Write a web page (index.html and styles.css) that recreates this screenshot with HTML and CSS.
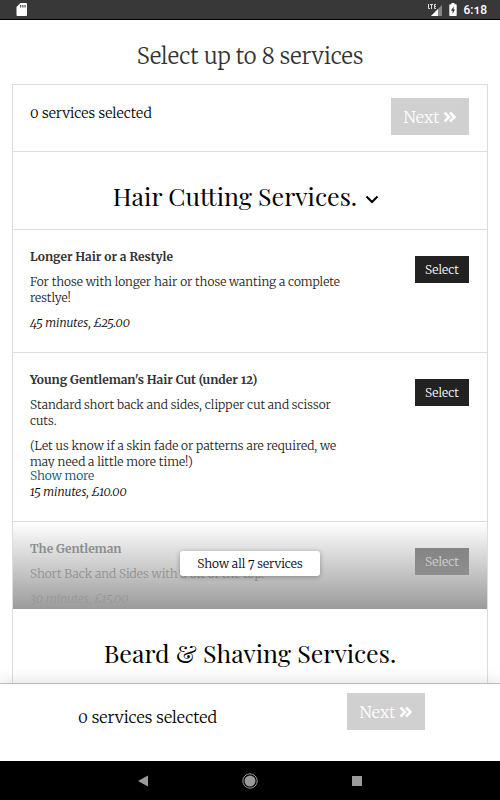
FILE: index.html
```
<!DOCTYPE html>
<html lang="en">
<head>
<meta charset="utf-8">
<meta name="viewport" content="width=device-width, initial-scale=1">
<title>Select services</title>
<link rel="stylesheet" href="styles.css">
</head>
<body>
<header class="status">
  <svg class="status-card" width="12" height="13" viewBox="0 0 12 13" aria-hidden="true"><path fill="#fff" d="M4.500 0H10a1 1 0 0 1 1 1v11a1 1 0 0 1-1 1H1.500a1 1 0 0 1-1-1V4z"/><path fill="#555" d="M4 2h1.300v2.500H4zM6.200 2h1.300v2.500H6.200zM8.400 2h1.300v2.500H8.400z"/></svg>
  <div class="status-right">
    <svg width="16" height="13" viewBox="0 0 16 13" aria-hidden="true"><path fill="#858585" d="M15 2v11H4z"/><path fill="#fff" d="M11 6v7H4z"/><path fill="none" stroke="#ddd" d="M1.500 1v4.500H3M3 1.500h3M4.500 1.500V6M9 1.500H7.500v4H9M7.500 3.500H9"/></svg>
    <svg width="8" height="13" viewBox="0 0 8 13" aria-hidden="true"><path fill="#fff" d="M2.500 0h3v1.300H7a.7.7 0 0 1 .7.7v10.200a.7.7 0 0 1-.7.7H1a.7.7 0 0 1-.7-.7V2A.7.7 0 0 1 1 1.300h1.500z"/><path fill="#333" d="M4.600 3.500 2 7.800h1.600v3L6 6.500H4.600z"/></svg>
    <span>6:18</span>
  </div>
</header>

<main class="content">
  <h1 class="page-title">Select up to 8 services</h1>
  <div class="card">
    <div class="summary">
      <span class="summary-text">0 services selected</span>
      <button class="next" type="button">Next
        <svg width="13" height="12" viewBox="0 0 13 12" aria-hidden="true"><path d="M1.500 1.500 6 6l-4.500 4.500M7 1.500 11.500 6 7 10.500"/></svg>
      </button>
    </div>

    <h2 class="group-title">Hair Cutting Services.
      <svg width="14" height="9" viewBox="0 0 14 9" aria-hidden="true"><path d="M1.500 1.500 7 7l5.500-5.500"/></svg>
    </h2>

    <div class="services">
      <article class="service">
        <div class="service-text">
          <h3>Longer Hair or a Restyle</h3>
          <div class="description"><p>For those with longer hair or those wanting a complete restlye!</p></div>
          <p class="meta">45 minutes, £25.00</p>
        </div>
        <button class="select" type="button">Select</button>
      </article>
      <article class="service">
        <div class="service-text">
          <h3>Young Gentleman's Hair Cut (under 12)</h3>
          <div class="description clipped">
            <p>Standard short back and sides, clipper cut and scissor cuts.</p>
            <p>(Let us know if a skin fade or patterns are required, we may need a little more time!)</p>
          </div>
          <a class="more" href="#more">Show more</a>
          <p class="meta">15 minutes, £10.00</p>
        </div>
        <button class="select" type="button">Select</button>
      </article>
      <div class="preview">
        <article class="service">
          <div class="service-text">
            <h3>The Gentleman</h3>
            <div class="description"><p>Short Back and Sides with a bit of the top.</p></div>
            <p class="meta">30 minutes, £15.00</p>
          </div>
          <button class="select" type="button">Select</button>
        </article>
        <div class="fade"><button class="show-all" type="button">Show all 7 services</button></div>
      </div>
    </div>

    <h2 class="group-title">Beard &amp; Shaving Services.</h2>
  </div>
</main>

<footer class="bar">
  <span class="bar-text">0 services selected</span>
  <button class="next" type="button">Next
    <svg width="13" height="12" viewBox="0 0 13 12" aria-hidden="true"><path d="M1.500 1.500 6 6l-4.500 4.500M7 1.500 11.500 6 7 10.500"/></svg>
  </button>
</footer>

<nav class="system" aria-label="System">
  <button type="button" aria-label="Back"><svg width="16" height="16" viewBox="0 0 16 16"><path fill="#9b9b9b" d="M13 2.500v11L3 8z"/></svg></button>
  <button type="button" aria-label="Home"><svg width="16" height="16" viewBox="0 0 16 16"><circle cx="8" cy="8" r="7.200" fill="none" stroke="#9b9b9b"/><circle cx="8" cy="8" r="5.500" fill="#9b9b9b"/></svg></button>
  <button type="button" aria-label="Recent"><svg width="16" height="16" viewBox="0 0 16 16"><path fill="#9b9b9b" d="M3 3h10v10H3z"/></svg></button>
</nav>
</body>
</html>
```
FILE: styles.css
```
* { box-sizing: border-box; }
html, body { height: 100%; }
body {
  margin: 0;
  display: flex;
  flex-direction: column;
  background: #fff;
  color: #000;
  font-family: Merriweather, "Liberation Serif", serif;
  font-size: 12px;
  font-weight: 300;
  font-variant-numeric: oldstyle-nums;
  line-height: 16px;
}
h1, h2, h3, p { margin: 0; font-weight: inherit; }
button {
  font: inherit;
  border: 0;
  padding: 0;
  cursor: pointer;
}

.status {
  flex: none;
  height: 20px;
  padding: 0 13px 0 16px;
  display: flex;
  justify-content: space-between;
  align-items: center;
  background: #383838;
  border-bottom: 1px solid #000;
  color: #fff;
  font-family: Roboto, sans-serif;
  font-size: 12px;
  font-weight: 500;
}
.status-right { display: flex; align-items: center; gap: 6px; }

.content { flex: 1; min-height: 0; overflow: hidden; padding: 20px 12px 0; }
.page-title {
  font-size: 22px;
  line-height: 32px;
  margin-bottom: 12px;
  text-align: center;
  color: #333;
}
.card { border: 1px solid #ddd; min-height: 100%; }

.summary {
  display: flex;
  justify-content: space-between;
  align-items: flex-start;
  padding: 13px 18px 16px 17px;
  border-bottom: 1px solid #ddd;
}
.summary-text { font-size: 14px; line-height: 30px; }
.next {
  display: flex;
  align-items: center;
  justify-content: center;
  gap: 4px;
  width: 78px;
  height: 37px;
  background: #d0d0d0;
  color: #fff;
  font-size: 16px;
}
.next svg { fill: none; stroke: #fff; stroke-width: 2.5; }

.group-title {
  display: flex;
  justify-content: center;
  align-items: center;
  gap: 8px;
  padding: 24px 0 13px;
  font-family: "Playfair Display", "Liberation Serif", serif;
  font-size: 25px;
  font-weight: 400;
  line-height: 40px;
  color: #000;
}
.group-title svg { margin: 6px 8px 0 0; fill: none; stroke: #000; stroke-width: 2; }

.service {
  display: grid;
  grid-template-columns: 1fr 54px;
  column-gap: 65px;
  align-items: start;
  padding: 19px 18px 21px 17px;
  border-top: 1px solid #ddd;
}
.service h3 { font-size: 12px; font-weight: 700; color: #333; }
.description { margin: 9px 0; color: #222; }
.description p + p { margin-top: 9px; }
.clipped { height: 71px; margin-bottom: 0; overflow: hidden; }
.more { display: block; color: #00507a; text-decoration: none; }
.meta { font-style: italic; }
.select {
  height: 27px;
  margin-top: 7px;
  background: #222;
  color: #fff;
}

.preview { position: relative; height: 88px; overflow: hidden; }
.fade {
  position: absolute;
  inset: 1px 0 0;
  display: flex;
  justify-content: center;
  align-items: flex-start;
  padding-top: 29px;
  background: linear-gradient(rgba(255, 255, 255, .4), #9b9b9b);
}
.show-all {
  width: 140px;
  height: 25px;
  border-radius: 3px;
  background: #fff;
  color: #000;
  box-shadow: 0 1px 5px rgba(0, 0, 0, .3);
}

.bar {
  flex: none;
  z-index: 1;
  display: flex;
  justify-content: space-between;
  align-items: flex-start;
  padding: 9px 15% 31px 78px;
  background: #fff;
  border-top: 1px solid #bbb;
  box-shadow: 0 -2px 14px rgba(0, 0, 0, .12);
}
.bar-text { font-size: 16px; line-height: 48px; height: 37px; }

.system {
  flex: none;
  z-index: 1;
  height: 39px;
  display: flex;
  justify-content: center;
  align-items: center;
  gap: 91px;
  background: #000;
}
.system button { display: flex; background: none; }
```
